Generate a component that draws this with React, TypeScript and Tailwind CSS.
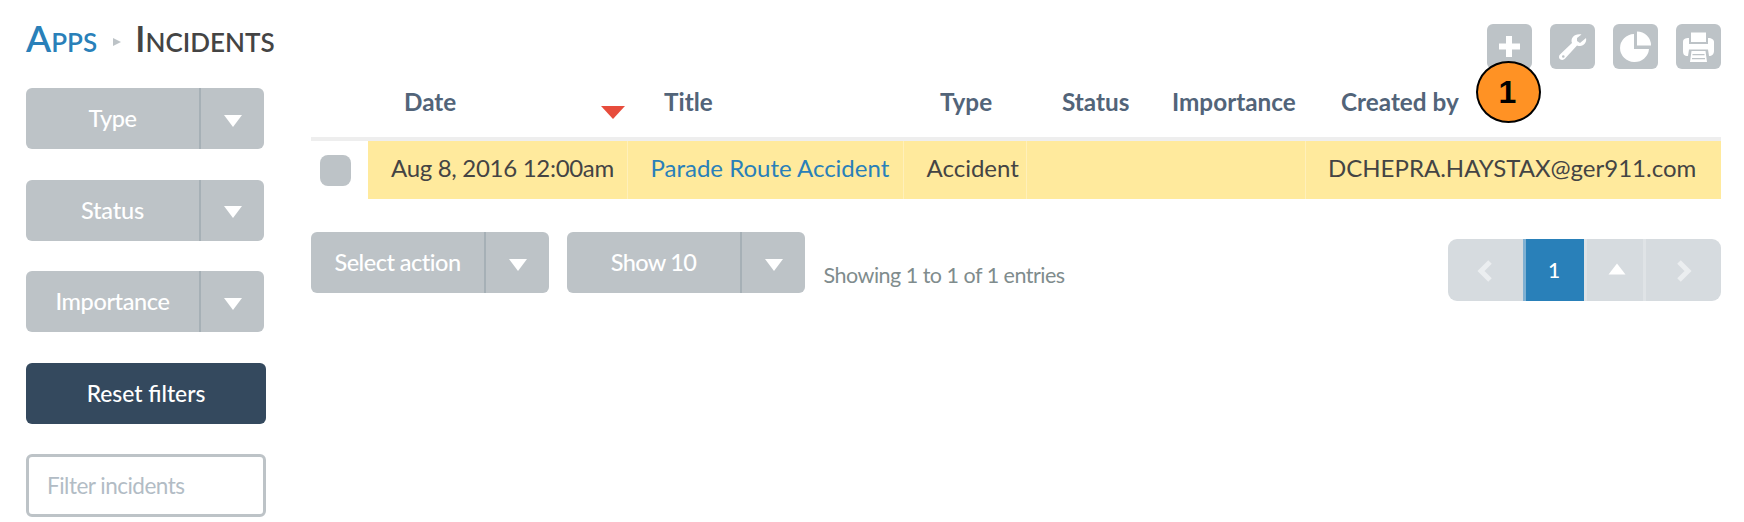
import React from "react";

function Caret({ up = false }: { up?: boolean }) {
  return (
    <svg width="18" height="12" viewBox="0 0 18 12" className="shrink-0 fill-white">
      {up ? <path d="M0.5 11.5 9 0.5l8.5 11z" /> : <path d="M0 0h18L9 12z" />}
    </svg>
  );
}

function SplitButton({ label, tracking }: { label: string; tracking: string }) {
  return (
    <div className="flex h-[61px] w-[238px] overflow-hidden rounded-md bg-[#bdc3c7] text-[23.5px] font-medium text-white">
      <div className={`flex w-[173px] items-center justify-center pt-px ${tracking}`}>{label}</div>
      <div className="w-0.5 bg-[#a6b0b6]" />
      <div className="flex grow items-center justify-center pt-1">
        <Caret />
      </div>
    </div>
  );
}

function Tool({ children }: { children: React.ReactNode }) {
  return (
    <button className="h-[45px] w-[45px] rounded-md bg-[#bdc3c7]">
      <svg viewBox="0 0 45 45" className="h-[45px] w-[45px] fill-white">{children}</svg>
    </button>
  );
}

const head = "text-left text-[24.3px] leading-8 font-bold text-[#526479] whitespace-nowrap";
const cell = "bg-[#ffea9d] text-2xl whitespace-nowrap border-l border-[#fff0ba]";

export default function App() {
  return (
    <div className="flex h-[522px] w-[1744px] overflow-hidden bg-white font-['Lato',sans-serif] text-[#444]">
      <aside className="flex w-[311px] shrink-0 flex-col pl-[26px]">
        <h1 className="flex h-[88px] items-start pt-[17px] text-[36.7px] leading-[43px] font-semibold whitespace-nowrap [font-variant-caps:small-caps]">
          <span className="w-[87px] text-[#2980b9]">Apps</span>
          <svg width="8" height="8" viewBox="0 0 8 8" className="mt-[21px] mr-[14px] fill-[#bdc3c7]"><path d="M0 0l8 4-8 4z" /></svg>
          <span>Incidents</span>
        </h1>
        <div className="flex w-[240px] flex-col gap-[30.5px]">
          <SplitButton label="Type" tracking="tracking-[-0.5px]" />
          <SplitButton label="Status" tracking="tracking-[-0.2px]" />
          <SplitButton label="Importance" tracking="tracking-[-0.4px]" />
          <button className="h-[61px] rounded-md bg-[#34495e] text-[22.8px] font-medium text-white">Reset filters</button>
          <input placeholder="Filter incidents" className="h-[63px] rounded-md border-3 border-[#bdc3c7] px-[18px] text-[22.5px] tracking-[-0.5px] placeholder:text-[#b2bcc5]" />
        </div>
      </aside>
      <main className="w-[1410px] shrink-0">
        <div className="flex h-[70px] justify-end gap-[18px] pt-[23.5px]">
          <div className="relative h-[45px] w-[45px]">
            <Tool><path d="M19 12h6v7.500h8v6h-8V33h-6v-7.500h-7v-6h7z" /></Tool>
            <div className="absolute top-[37.5px] -left-[11px] flex h-[62px] w-[65px] items-center justify-center rounded-[50%] border-2 border-black bg-[#ff9224] pr-0.5 font-['Liberation_Sans',sans-serif] text-[32px] font-bold text-black">1</div>
          </div>
          <Tool>
            <path fillRule="evenodd" d="M36 14c1 4-2 8-6 8-1 0-2 0-3-.5L16 33.500c-1.500 2-3.500 3-5.500 2s-2-4 0-5.500L22 19c-2-5 3-10 9.500-8.500L27 14v3l3 2z M12 32.500a1.300 1.300 0 1 0 2.600 0a1.300 1.300 0 1 0-2.600 0z" />
          </Tool>
          <Tool><path d="M21 10v15h15a14.500 14 0 1 1-15-15zM24 7.500A14 14 0 0 1 38 21.500H24z" /></Tool>
          <Tool><path d="M15 8.500h15v9.500H15zM13 14v6h19v-6c4 0 6 2 6 4v9c0 3-2 5-5 5l-1-6.500H13L12 32c-4 0-5-2-5-5v-9c0-3 2-4 6-4zM15.500 27h14l1.500 11H14zM16.500 30v1.200h12V30zM16 34v1.200h13V34z" fillRule="evenodd" /></Tool>
        </div>
        <table className="w-[1410px] table-fixed border-collapse">
          <colgroup>
            <col className="w-[57px]" /><col className="w-[259px]" /><col className="w-[276px]" /><col className="w-[123px]" /><col className="w-[125px]" /><col className="w-[154px]" /><col className="w-[416px]" />
          </colgroup>
          <thead>
            <tr className="h-[69px] border-b-4 border-[#eee]">
              <th />
              <th className={`${head} pl-9`}>
                <div className="flex h-9 items-start justify-between pr-[2px]"><span>Date</span><svg width="24" height="13" viewBox="0 0 24 13" className="mt-5 fill-[#e74c3c]"><path d="M0 0h24L12 13z" /></svg></div>
              </th>
              <th className={`${head} pl-[37px]`}><div className="pb-1">Title</div></th>
              <th className={`${head} pl-[37px]`}><div className="pb-1">Type</div></th>
              <th className={`${head} pl-9`}><div className="pb-1">Status</div></th>
              <th className={`${head} pl-[21px]`}><div className="pb-1">Importance</div></th>
              <th className={`${head} pl-9`}><div className="pb-1">Created by</div></th>
            </tr>
          </thead>
          <tbody>
            <tr className="h-[60px]">
              <td><div className="ml-[9px] h-[31px] w-[31px] rounded-lg bg-[#bdc3c7]" /></td>
              <td className="bg-[#ffea9d] pb-[5px] pl-[23px] text-2xl tracking-[-0.3px] whitespace-nowrap">Aug 8, 2016 12:00am</td>
              <td className={`${cell} pb-[5px] pl-[23px] text-[#2980b9]`}>Parade Route Accident</td>
              <td className={`${cell} pb-[5px] pl-[23px]`}>Accident</td>
              <td className={cell} />
              <td className="bg-[#ffea9d]" />
              <td className={`${cell} pb-[5px] pl-[22.5px]`}>DCHEPRA.HAYSTAX@ger911.com</td>
            </tr>
          </tbody>
        </table>
        <div className="flex pt-[33px]">
          <SplitButton label="Select action" tracking="tracking-[-0.5px]" />
          <div className="ml-[18px]"><SplitButton label="Show 10" tracking="tracking-[-0.7px]" /></div>
          <div className="ml-[18.5px] pt-[29px] text-[21.5px] leading-7 tracking-[-0.5px] text-[#7f8c8d]">Showing 1 to 1 of 1 entries</div>
          <nav className="mt-[7px] ml-auto flex h-[62px] w-[273px] overflow-hidden rounded-[9px] bg-[#d6dbdf]">
            <div className="flex w-[75px] items-center justify-center pr-0.5 pt-0.5"><svg width="16" height="24" viewBox="0 0 16 24" className="fill-none stroke-[#ebeef0] stroke-[5]"><path d="M13 3 4 12l9 9" /></svg></div>
            <div className="flex w-[61px] items-center justify-center border-l-3 border-[#7fb0d2] bg-[#2980b9] pr-0.5 pb-px text-[21px] font-medium text-white">1</div>
            <div className="flex w-[62px] items-center justify-center border-x-3 border-[#dfe3e6] pb-0.5 pl-1"><Caret up /></div>
            <div className="flex w-[75px] items-center justify-center pt-0.5"><svg width="16" height="24" viewBox="0 0 16 24" className="fill-none stroke-[#ebeef0] stroke-[5]"><path d="M3 3l9 9-9 9" /></svg></div>
          </nav>
        </div>
      </main>
    </div>
  );
}
